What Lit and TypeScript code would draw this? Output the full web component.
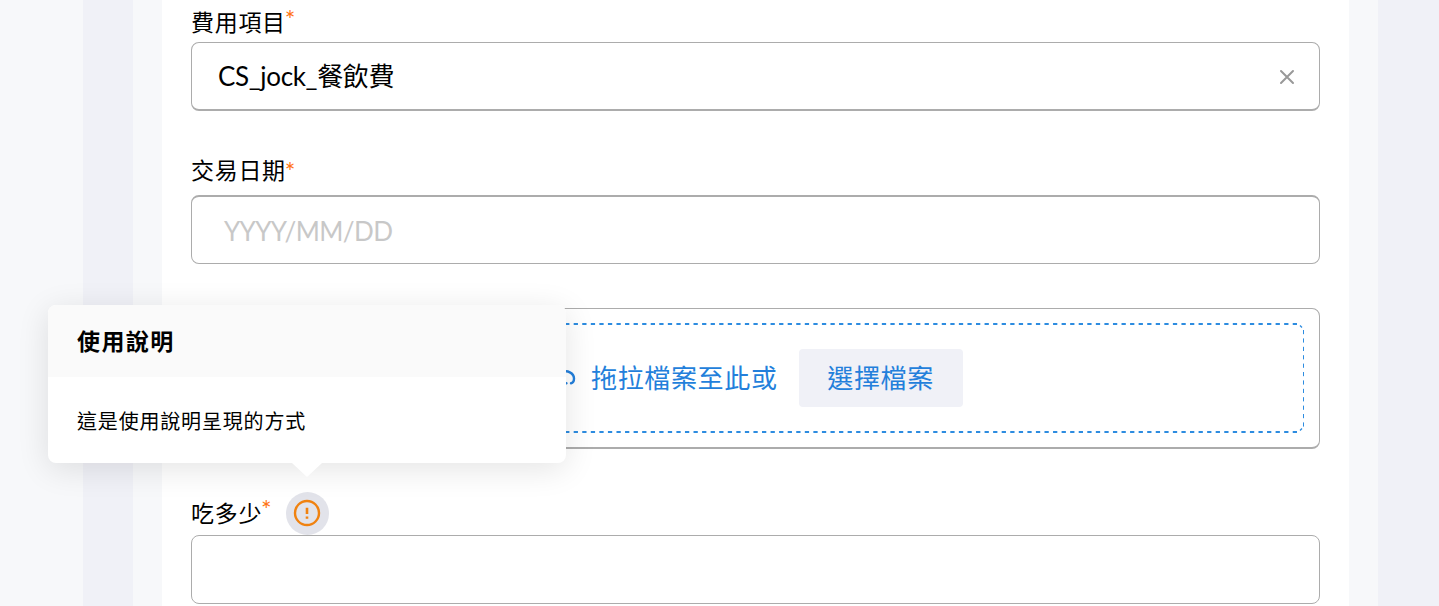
import { LitElement, html, css, svg } from 'lit';
import { customElement, property } from 'lit/decorators.js';

const clearIcon = svg`<path d="M2 2 L14 14 M14 2 L2 14" />`;

/**
 * A labelled form field. The control itself goes in the default slot.
 */
@customElement('form-field')
export class FormField extends LitElement {
  @property() label = '';

  static styles = css`
    :host {
      display: block;
    }

    .label {
      display: flex;
      align-items: center;
      height: 44px;
      font-size: 23px;
      letter-spacing: 0.7px;
      white-space: nowrap;
    }

    .text {
      padding: var(--label-drop, 0) 0 var(--label-lift, 0);
    }

    .star {
      align-self: flex-start;
      width: 11px;
      margin: var(--star-top, 5px) 0 0 -1px;
      color: #ff7414;
      font-size: 25px;
      line-height: 24px;
      letter-spacing: 0;
    }

    .control {
      display: flex;
      align-items: center;
      box-sizing: border-box;
      height: 69px;
      padding: 0 24px 0 26px;
      border: solid #acacac;
      border-width: var(--edge, 1px);
      border-radius: 8px;
      font-size: 26px;
    }
  `;

  render() {
    return html`
      <div class="label">
        <span class="text">${this.label}</span><span class="star">*</span>
        <slot name="hint"></slot>
      </div>
      <div class="control"><slot></slot></div>
    `;
  }
}

/**
 * Help popover with a header, a body and an arrow that points down.
 */
@customElement('help-popover')
export class HelpPopover extends LitElement {
  @property() heading = '';

  static styles = css`
    :host {
      display: block;
      width: 518px;
      border-radius: 8px;
      background: #fff;
      box-shadow: 0 6px 32px rgba(0, 0, 0, 0.11);
    }

    .header {
      display: flex;
      align-items: center;
      box-sizing: border-box;
      height: 72px;
      padding: 0 29px 3px;
      border-radius: 8px 8px 0 0;
      background: #fafafa;
      font-size: 23px;
      font-weight: 700;
      letter-spacing: 1.4px;
    }

    .body {
      display: flex;
      align-items: center;
      height: 86px;
      padding: 0 29px;
      font-size: 20px;
      letter-spacing: 0.82px;
    }

    .arrow {
      position: absolute;
      top: 100%;
      left: 244px;
      width: 30px;
      height: 14px;
      background: #fff;
      clip-path: polygon(0 0, 100% 0, 50% 100%);
    }
  `;

  render() {
    return html`
      <div class="header">${this.heading}</div>
      <div class="body"><slot></slot></div>
      <div class="arrow"></div>
    `;
  }
}

@customElement('app-root')
export class AppRoot extends LitElement {
  static styles = css`
    :host {
      display: grid;
      grid-template-columns: 83px 50px 29px 1187px 29px 61px;
      position: relative;
      width: 1439px;
      height: 606px;
      overflow: hidden;
      color: #000;
      font-family: Lato, 'Noto Sans CJK TC', sans-serif;
    }

    .light {
      background: #f7f8fa;
    }

    .dark {
      background: #f0f1f7;
    }

    .form {
      display: flex;
      flex-direction: column;
      box-sizing: border-box;
      height: 606px;
      padding: 0 29px;
      background: #fff;
    }

    .item {
      margin-top: -2px;
      --edge: 1px 1px 2px;
      --label-drop: 2px;
      --star-top: 9px;
    }

    .date {
      margin-top: 40px;
      --edge: 2px 1px 1px;
      --label-lift: 9px;
      --star-top: 8px;
    }

    .amount {
      margin-top: 42px;
      --label-lift: 2px;
      --star-top: 6px;
    }

    .value {
      flex: 1;
      padding-bottom: 3px;
      letter-spacing: -0.35px;
    }

    .placeholder {
      padding: 1px 0 0 6px;
      color: #c8c8c8;
      letter-spacing: -0.6px;
    }

    .clear {
      width: 16px;
      height: 16px;
      margin-top: 2px;
      fill: none;
      stroke: #999;
      stroke-width: 2;
      stroke-linecap: round;
    }

    .upload {
      display: grid;
      flex: none;
      box-sizing: border-box;
      height: 141px;
      margin-top: 44px;
      padding: 14px 15px;
      border: solid #acacac;
      border-width: 1px 1px 2px;
      border-radius: 8px;
    }

    .dashes,
    .drop {
      grid-area: 1 / 1;
    }

    .dashes {
      width: 1097px;
      height: 110px;
      fill: none;
      stroke: #2d8ce0;
    }

    .drop {
      display: flex;
      align-items: center;
      height: 110px;
      padding-left: 341px;
      color: #237fdb;
      font-size: 26px;
      letter-spacing: 0.65px;
      white-space: nowrap;
    }

    .prompt {
      padding-bottom: 4px;
    }

    .clip {
      width: 28px;
      height: 28px;
      margin-right: 15px;
      fill: none;
      stroke: currentColor;
      stroke-width: 2.4;
      stroke-linecap: round;
    }

    .pick {
      width: 164px;
      height: 58px;
      margin-left: 21px;
      padding: 0 0 4px;
      border: 0;
      border-radius: 4px;
      background: #f0f1f7;
      color: inherit;
      font: inherit;
      letter-spacing: inherit;
    }

    .hint {
      width: 43px;
      height: 43px;
      margin-left: 14px;
    }

    .popover {
      position: absolute;
      top: 305px;
      left: 48px;
    }
  `;

  render() {
    return html`
      <div class="light"></div>
      <div class="dark"></div>
      <div class="light"></div>
      <main class="form">
        <form-field class="item" label="費用項目">
          <span class="value">CS_jock_餐飲費</span>
          <svg class="clear" viewBox="0 0 16 16">${clearIcon}</svg>
        </form-field>
        <form-field class="date" label="交易日期">
          <span class="placeholder">YYYY/MM/DD</span>
        </form-field>
        <div class="upload">
          <svg class="dashes" viewBox="0 0 1097 110">
            <path stroke-width="2" stroke-dasharray="4.28 4.28" d="M1090 1 H8 M1090 109 H8" />
            <path stroke-width="1" stroke-dasharray="4.2 4.2" d="M1096.5 7 V104 M0.5 7 V104" />
            <path stroke-width="1.3" d="M1093 2.5 L1095 4.5 M1093 107.5 L1095 105.5" />
          </svg>
          <div class="drop">
            <svg class="clip" viewBox="0 0 28 28">
              <path d="M4 17 L14 8.5 C19 5.5 26 9 26 14.5 C26 17 24.5 19 23 19.3 M8 24 L13 20 C15 18.5 17 18.5 18.5 19.3" />
            </svg>
            <span class="prompt">拖拉檔案至此或</span>
            <button class="pick">選擇檔案</button>
          </div>
        </div>
        <form-field class="amount" label="吃多少">
          <svg slot="hint" class="hint" viewBox="0 0 43 43">
            <circle cx="21.5" cy="21.5" r="21.5" fill="#e2e3ea" />
            <circle cx="21" cy="21" r="12" fill="none" stroke="#f08210" stroke-width="2.4" />
            <path d="M21 15.8 V22 M21 24.4 V26.8" stroke="#f08210" stroke-width="2.6" />
          </svg>
        </form-field>
      </main>
      <div class="light"></div>
      <div class="dark"></div>
      <help-popover class="popover" heading="使用說明">這是使用說明呈現的方式</help-popover>
    `;
  }
}
